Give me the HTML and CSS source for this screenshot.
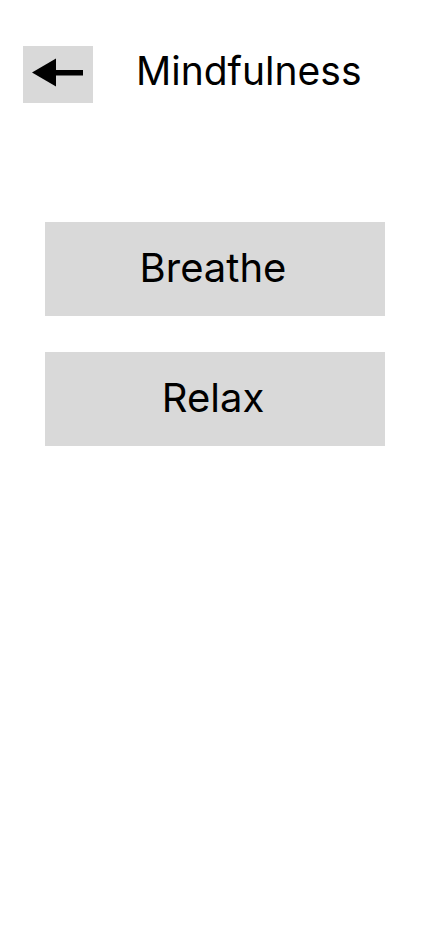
FILE: index.html
```html
<!DOCTYPE html>
<html lang="en">
<head>
<meta charset="utf-8">
<link rel="stylesheet" href="styles.css">
</head>
<body>
<header class="header">
  <button class="back" aria-label="Back">
    <svg width="70" height="57" viewBox="0 0 70 57">
      <polygon points="9,26.5 33,12.5 33,40.5" fill="#000"/>
      <rect x="32" y="24" width="28" height="5.5" fill="#000"/>
    </svg>
  </button>
  <h1 class="title">Mindfulness</h1>
</header>
<main class="list">
  <button class="item">Breathe</button>
  <button class="item">Relax</button>
</main>
</body>
</html>
```
FILE: styles.css
```css
* { box-sizing: border-box; }
html, body { margin: 0; padding: 0; background: #fff; }
body {
  font-family: Inter, "Noto Sans", sans-serif;
  color: #000;
  width: 430px;
  height: 932px;
}
.header {
  display: flex;
  align-items: flex-start;
  padding: 46px 0 0 23px;
}
.back {
  width: 70px;
  height: 57px;
  padding: 0;
  border: 0;
  background: #d9d9d9;
  display: flex;
}
.title {
  margin: 1px 0 0 43px;
  font-size: 39px;
  font-weight: 400;
  line-height: normal;
}
.list {
  display: flex;
  flex-direction: column;
  gap: 36px;
  padding: 119px 45px 0 45px;
}
.item {
  height: 94px;
  width: 340px;
  border: 0;
  background: #d9d9d9;
  font-family: Inter, "Noto Sans", sans-serif;
  font-size: 40px;
  font-weight: 400;
  color: #000;
  padding: 0 4px 3px 0;
}
```
